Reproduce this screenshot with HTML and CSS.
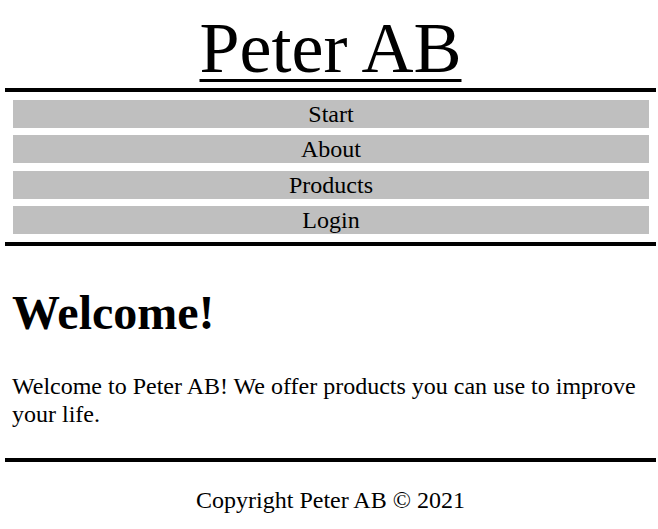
FILE: index.html
```
<!DOCTYPE html>
<html lang="en">
<head>
<meta charset="utf-8">
<title>Peter AB</title>
<link rel="stylesheet" href="styles.css">
</head>
<body>
<div class="page">
  <header class="site-header">
    <a class="brand" href="#">Peter AB</a>
  </header>
  <nav class="main-nav">
    <a class="nav-item" href="#">Start</a>
    <a class="nav-item" href="#">About</a>
    <a class="nav-item" href="#">Products</a>
    <a class="nav-item" href="#">Login</a>
  </nav>
  <main class="content">
    <h1 class="title">Welcome!</h1>
    <p class="intro">Welcome to Peter AB! We offer products you can use to improve your life.</p>
  </main>
  <footer class="site-footer">
    <p class="copyright">Copyright Peter AB &copy; 2021</p>
  </footer>
</div>
</body>
</html>
```
FILE: styles.css
```
html, body {
  margin: 0;
  padding: 0;
  background: #ffffff;
}

body {
  font-family: "Liberation Serif", "Times New Roman", serif;
  font-size: 24px;
  color: #000000;
}

.page {
  width: 651px;
  margin-left: 5px;
  padding-top: 8px;
}

.site-header {
  text-align: center;
  border-bottom: 4px solid #000000;
}

.brand {
  font-size: 72px;
  line-height: 80px;
  color: #000000;
  text-decoration: underline;
  text-decoration-thickness: 3px;
  text-underline-offset: 7px;
}

.main-nav {
  display: flex;
  flex-direction: column;
  gap: 7.4px;
  padding: 8px 7px 8px 8px;
  border-bottom: 4px solid #000000;
}

.nav-item {
  display: block;
  background: #bfbfbf;
  color: #000000;
  text-decoration: none;
  text-align: center;
  height: 28px;
  line-height: 28px;
}

.content {
  padding: 39px 7px 0 7px;
  border-bottom: 4px solid #000000;
}

.title {
  margin: 0;
  font-size: 48px;
  font-weight: bold;
  line-height: 55px;
}

.intro {
  margin: 33px 0 0 0;
  line-height: 27.6px;
  padding-bottom: 30px;
}

.site-footer {
  text-align: center;
  padding-top: 25px;
}

.copyright {
  margin: 0;
  line-height: 27.6px;
}
```
